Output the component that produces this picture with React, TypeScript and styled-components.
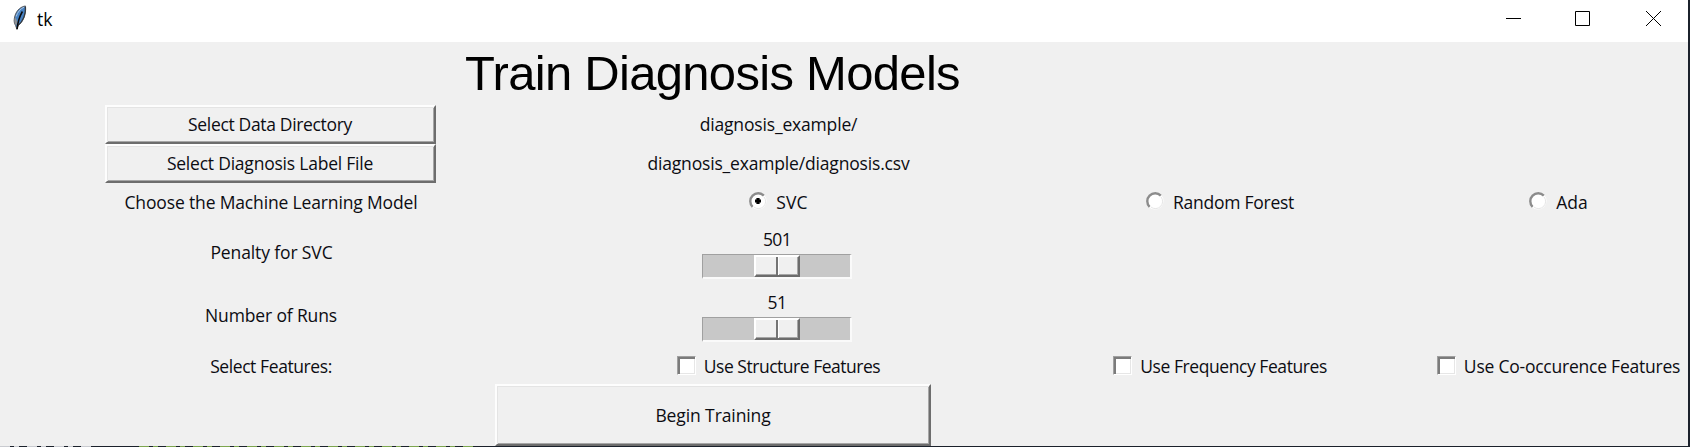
import React, { useState } from "react";
import styled, { createGlobalStyle } from "styled-components";

const GlobalStyle = createGlobalStyle`
  * { box-sizing: border-box; }
  body { margin: 0; background: #1b212b; overflow: hidden; }
  button { border-radius: 0; cursor: default; }
`;

const Desktop = styled.div`
  width: 1690px;
  height: 447px;
  overflow: hidden;
  background: #1b212b;
  font-family: "Open Sans", sans-serif;
  font-size: 17.5px;
  color: #0c0c12;
`;

const Window = styled.main`
  width: 1688px;
  height: 446px;
  background: #f0f0f0;
  display: flex;
  flex-direction: column;
`;

/* Sliver of the editor that shows below the window. */
const EditorEdge = styled.div`
  height: 1px;
  display: grid;
  grid-template-columns: 93px 46px 336px 1fr;
`;

const EdgeCode = styled.div<{ $color?: string }>`
  background: ${(p) =>
    p.$color
      ? `repeating-linear-gradient(90deg, ${p.$color} 0 10px, #1b212b 10px 14px, ${p.$color} 14px 19px, #1b212b 19px 27px)`
      : "#1b212b"};
`;

const TitleBar = styled.header`
  height: 42px;
  flex: none;
  background: #fff;
  display: flex;
  align-items: flex-start;
  padding-left: 13px;
`;

const Feather = styled.svg`
  width: 14px;
  height: 25px;
  margin-top: 5px;
`;

const WindowName = styled.span`
  margin-left: 10px;
  line-height: 24px;
  padding-top: 7px;
  flex: 1;
  color: #000;
`;

const WindowControls = styled.div`
  display: flex;
  gap: 54px;
  padding: 11px 27px 0 0;
`;

const ControlIcon = styled.svg`
  width: 15px;
  height: 15px;
  display: block;
  fill: none;
  stroke: #000;
  stroke-width: 1;

  &:last-child { margin-left: 2px; }
`;

const Form = styled.div`
  flex: 1;
  display: grid;
  grid-template-columns: 541px 473px 412px 262px;
  grid-template-rows: 63px 39px 39px 39px 62px 63px 37px 62px;
`;

const Cell = styled.div<{ $span?: number; $left?: number }>`
  grid-column: span ${(p) => p.$span ?? 1};
  display: flex;
  align-items: center;
  justify-content: center;
  padding-left: ${(p) => p.$left ?? 0}px;
`;

const Heading = styled.h1`
  margin: 0;
  padding: 0 1px 2px 0;
  font: 400 49px/60px "Liberation Sans", Arial, sans-serif;
  letter-spacing: -0.7px;
  color: #000;
  white-space: nowrap;
`;

const Text = styled.span<{ $track?: number; $lift?: boolean }>`
  letter-spacing: ${(p) => p.$track ?? 0}px;
  line-height: 24px;
  padding-bottom: ${(p) => (p.$lift ? 2 : 0)}px;
  white-space: nowrap;
`;

const RaisedButton = styled.button<{ $large?: boolean }>`
  width: ${(p) => (p.$large ? 436 : 331)}px;
  height: ${(p) => (p.$large ? 62 : 39)}px;
  margin-right: ${(p) => (p.$large ? 0 : 1)}px;
  padding: 0;
  font: inherit;
  color: inherit;
  background: #f0f0f0;
  border: 2px solid;
  border-color: #fdfdfd #6d6d6d #6d6d6d #fdfdfd;
  box-shadow: inset 1px 1px 0 #e4e4e4, inset -1px -1px 0 #a6a6a6;
  display: flex;
  align-items: center;
  justify-content: center;
`;

const Choice = styled.label<{ $gap: number }>`
  display: flex;
  align-items: center;
  gap: ${(p) => p.$gap}px;
`;

const HiddenInput = styled.input`
  appearance: none;
  width: 0;
  height: 0;
  margin: 0;
  position: absolute;
`;

const RadioMark = styled.svg`
  width: 18px;
  height: 18px;
  margin-top: -3px;
`;

const CheckMark = styled.span`
  width: 19px;
  height: 19px;
  margin-top: -1px;
  background: #fff;
  border: 1px solid;
  border-color: #a0a0a0 #fff #fff #a0a0a0;
  box-shadow: inset 2px 2px 0 #7b7b7b, inset -1px -1px 0 #e6e6e6;
  display: grid;
  place-items: center;
  font-size: 13px;
`;

const Scale = styled.div`
  width: 150px;
  margin-right: 1px;
  display: flex;
  flex-direction: column;
  align-items: center;
`;

const Trough = styled.div`
  width: 150px;
  height: 25px;
  margin-top: 3px;
  background: #c8c8c8;
  border: 1px solid;
  border-width: 1px 2px 2px 1px;
  border-color: #a0a0a0 #fafafa #fafafa #a0a0a0;
  padding-left: 51px;
`;

const Thumb = styled.div`
  width: 46px;
  height: 22px;
  background: #f0f0f0;
  border: 2px solid;
  border-color: #fff #6c6c6c #6c6c6c #fff;
  box-shadow: inset -1px -1px 0 #a6a6a6;
  display: flex;
  justify-content: center;

  &::before {
    content: "";
    width: 3px;
    background: linear-gradient(90deg, #747474 0 1.5px, #fff 1.5px);
  }
`;

function Radio({ checked, onSelect, label, track }: { checked: boolean; onSelect: () => void; label: string; track: number }) {
  return (
    <Choice $gap={9}>
      <HiddenInput type="radio" checked={checked} onChange={onSelect} />
      <RadioMark viewBox="0 0 18 18">
        <circle cx="9" cy="9" r="8.6" fill="#fff" />
        <path d="M3.6 14.8A7.8 7.8 0 0 1 14.8 3.6" fill="none" stroke="#8c8c8c" strokeWidth="2.4" />
        <path d="M15.1 5A7.2 7.2 0 0 1 5 15.1" fill="none" stroke="#e6e6e6" strokeWidth="1" />
        {checked && <path d="M7.4 6H10.6V7.4H12V10.6H10.6V12H7.4V10.6H6V7.4H7.4Z" fill="#000" />}
      </RadioMark>
      <Text $track={track} $lift>{label}</Text>
    </Choice>
  );
}

function Check({ label, track }: { label: string; track: number }) {
  const [on, setOn] = useState(false);
  return (
    <Choice $gap={8}>
      <HiddenInput type="checkbox" checked={on} onChange={() => setOn(!on)} />
      <CheckMark>{on ? "✓" : null}</CheckMark>
      <Text $track={track}>{label}</Text>
    </Choice>
  );
}

function ScaleField({ value, track }: { value: number; track: number }) {
  return (
    <Scale>
      <Text $track={track}>{value}</Text>
      <Trough>
        <Thumb />
      </Trough>
    </Scale>
  );
}

export default function App() {
  const [model, setModel] = useState("svc");
  return (
    <Desktop>
      <GlobalStyle />
      <Window>
        <TitleBar>
          <Feather viewBox="0 0 14 25">
            <path d="M12.5 1C8 1.5 4 5 2.2 10C.8 14 .6 18 2.6 20.5L4 24.5L5.2 20.5C9.5 17.5 13.5 10 12.5 1Z" fill="#4682c4" stroke="#59595b" strokeWidth="1" />
            <path d="M11 2.2C7 4 4.4 7.5 3.2 11.5" fill="none" stroke="#a9c4df" strokeWidth="1" />
            <path d="M2 12C1 16 1.3 18.8 3.2 20.6L4.6 17Z" fill="#8e9296" />
            <path d="M12.4 2C13 9 10 16.5 5 20.4" fill="none" stroke="#34383d" strokeWidth="1.2" />
            <path d="M9.4 6.5C6.8 11 4.8 16 4.1 24" fill="none" stroke="#08090b" strokeWidth="1.5" />
          </Feather>
          <WindowName>tk</WindowName>
          <WindowControls>
            <ControlIcon viewBox="0 0 15 15"><path d="M0 7.5H15" /></ControlIcon>
            <ControlIcon viewBox="0 0 15 15"><path d="M.5 .5H14.5V14.5H.5Z" /></ControlIcon>
            <ControlIcon viewBox="0 0 15 15"><path d="M0 0L15 15M15 0L0 15" /></ControlIcon>
          </WindowControls>
        </TitleBar>
        <Form>
          <Cell $span={3}><Heading>Train Diagnosis Models</Heading></Cell>
          <Cell />

          <Cell><RaisedButton><Text $track={-0.34} $lift>Select Data Directory</Text></RaisedButton></Cell>
          <Cell $left={2}><Text $track={-0.17} $lift>diagnosis_example/</Text></Cell>
          <Cell $span={2} />

          <Cell><RaisedButton><Text $track={-0.22} $lift>Select Diagnosis Label File</Text></RaisedButton></Cell>
          <Cell $left={2}><Text $track={-0.17} $lift>diagnosis_example/diagnosis.csv</Text></Cell>
          <Cell $span={2} />

          <Cell $left={1}><Text $track={-0.15} $lift>Choose the Machine Learning Model</Text></Cell>
          <Cell $left={2}><Radio checked={model === "svc"} onSelect={() => setModel("svc")} label="SVC" track={0.2} /></Cell>
          <Cell><Radio checked={model === "forest"} onSelect={() => setModel("forest")} label="Random Forest" track={-0.25} /></Cell>
          <Cell $left={3}><Radio checked={model === "ada"} onSelect={() => setModel("ada")} label="Ada" track={0} /></Cell>

          <Cell $left={2}><Text $track={-0.12} $lift>Penalty for SVC</Text></Cell>
          <Cell><ScaleField value={501} track={-0.6} /></Cell>
          <Cell $span={2} />

          <Cell $left={1}><Text $track={-0.15} $lift>Number of Runs</Text></Cell>
          <Cell><ScaleField value={51} track={-0.5} /></Cell>
          <Cell $span={2} />

          <Cell $left={1}><Text $track={-0.41}>Select Features:</Text></Cell>
          <Cell $left={2}><Check label="Use Structure Features" track={-0.48} /></Cell>
          <Cell><Check label="Use Frequency Features" track={-0.43} /></Cell>
          <Cell $left={3}><Check label="Use Co-occurence Features" track={-0.23} /></Cell>

          <Cell $span={3}>
            <RaisedButton $large><Text $track={-0.1}>Begin Training</Text></RaisedButton>
          </Cell>
        </Form>
      </Window>
      <EditorEdge>
        <EdgeCode $color="#c9cbd0" />
        <EdgeCode />
        <EdgeCode $color="#7da64f" />
        <EdgeCode />
      </EditorEdge>
    </Desktop>
  );
}
